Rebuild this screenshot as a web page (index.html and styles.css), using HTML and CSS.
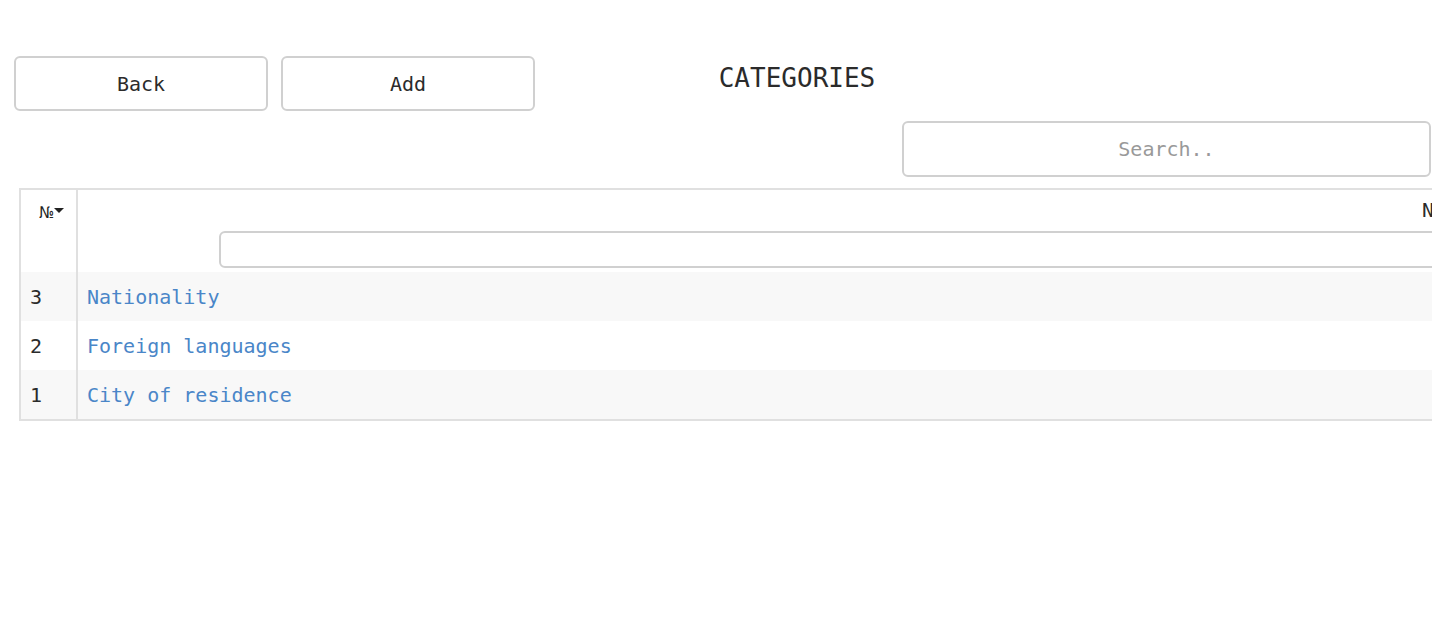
FILE: index.html
```html
<!DOCTYPE html>
<html>
<head>
<meta charset="utf-8">
<link rel="stylesheet" href="styles.css">
</head>
<body>
<div class="page">
  <div class="topbar">
    <div class="actions">
      <button class="btn">Back</button>
      <button class="btn">Add</button>
    </div>
    <h1 class="title">CATEGORIES</h1>
    <div></div>
  </div>
  <div class="search-row">
    <input class="search" type="text" placeholder="Search..">
  </div>
  <table class="grid">
    <thead>
      <tr>
        <th class="col-num"><span class="num-label">№</span><span class="sort-arrow"></span></th>
        <th class="col-name">
          <div class="name-label">Name</div>
          <input class="filter" type="text">
        </th>
      </tr>
    </thead>
    <tbody>
      <tr class="odd"><td class="col-num">3</td><td><a href="#">Nationality</a></td></tr>
      <tr><td class="col-num">2</td><td><a href="#">Foreign languages</a></td></tr>
      <tr class="odd"><td class="col-num">1</td><td><a href="#">City of residence</a></td></tr>
    </tbody>
  </table>
</div>
</body>
</html>
```
FILE: styles.css
```css
html, body {
  margin: 0;
  padding: 0;
  background: #fff;
  overflow: hidden;
}
body {
  font-family: "DejaVu Sans Mono", "Liberation Mono", monospace;
  color: #333;
  font-size: 20px;
}
.page {
  width: 1594px;
}
.topbar {
  display: grid;
  grid-template-columns: 1fr auto 1fr;
  align-items: start;
  padding-top: 56px;
}
.actions {
  display: flex;
  gap: 13px;
  padding-left: 14px;
}
.btn {
  box-sizing: border-box;
  width: 254px;
  height: 55px;
  border: 2px solid #d0d0d0;
  border-radius: 6px;
  background: #fff;
  font-family: "DejaVu Sans Mono", "Liberation Mono", monospace;
  font-size: 20px;
  color: #2b2b2b;
  padding: 0;
}
.title {
  margin: 0;
  padding-top: 4px;
  font-size: 26px;
  font-weight: normal;
  line-height: 36px;
  color: #2b2b2b;
}
.search-row {
  padding-left: 902px;
  margin-top: 10px;
}
.search {
  box-sizing: border-box;
  width: 529px;
  height: 56px;
  border: 2px solid #d0d0d0;
  border-radius: 6px;
  font-family: "DejaVu Sans Mono", "Liberation Mono", monospace;
  font-size: 20px;
  text-align: center;
  color: #333;
  outline: none;
}
.search::placeholder {
  color: #999;
}
.grid {
  margin: 11px 0 0 19px;
  width: 2797px;
  border-collapse: collapse;
  border: 2px solid #e0e0e0;
}
.grid th {
  font-weight: normal;
  vertical-align: top;
  padding: 0;
  border-right: 2px solid #e0e0e0;
}
.grid th.col-num {
  width: 49px;
  text-align: center;
  padding-top: 9px;
  padding-left: 6px;
  height: 73px;
}
.num-label {
  font-family: "DejaVu Sans Condensed", "DejaVu Sans", sans-serif;
  font-size: 16px;
  letter-spacing: -1px;
  color: #222;
}
.sort-arrow {
  display: inline-block;
  width: 0;
  height: 0;
  border-left: 5px solid transparent;
  border-right: 5px solid transparent;
  border-top: 5px solid #222;
  vertical-align: 5px;
  margin-left: 1px;
}
.col-name {
  text-align: center;
}
.name-label {
  padding-top: 8px;
  height: 33px;
  line-height: 24px;
  color: #2b2b2b;
}
.filter {
  box-sizing: border-box;
  width: 2456px;
  height: 37px;
  border: 2px solid #d0d0d0;
  border-radius: 6px;
  margin-bottom: 4px;
  display: block;
  margin-left: 141px;
}
.grid td {
  height: 49px;
  padding: 0 0 0 9px;
  vertical-align: middle;
  line-height: 20px;
}
.grid td.col-num {
  padding-left: 9px;
  border-right: 2px solid #e0e0e0;
  color: #2b2b2b;
}
.grid tr.odd td {
  background: #f8f8f8;
}
.grid a {
  color: #4a86c8;
  text-decoration: none;
}
```
